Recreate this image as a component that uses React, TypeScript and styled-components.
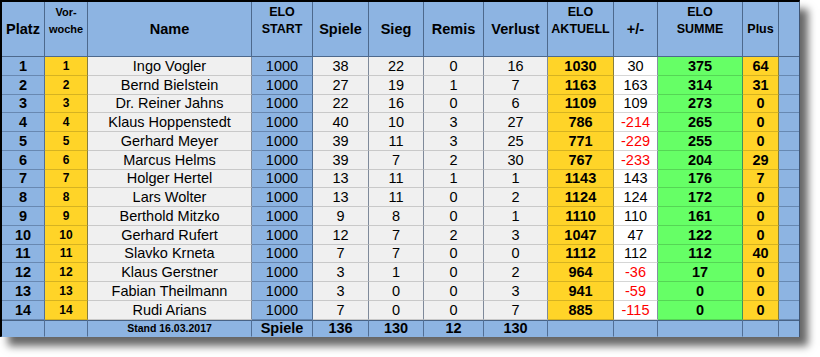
import React from "react";
import styled, { createGlobalStyle } from "styled-components";

const GlobalStyle = createGlobalStyle`
  body {
    margin: 0;
    background: #ffffff;
    font-family: "Liberation Sans", Arial, sans-serif;
  }
`;

const COLUMNS = "43px 43px 164px 61px 56px 55px 60px 64px 66px 44px 85px 36px 20px";

const COLORS: Record<string, string> = {
  blue: "#8db4e2",
  yellow: "#ffd428",
  grey: "#f0f0f0",
  white: "#ffffff",
  green: "#66ff66",
};

type Kind = "blue" | "yellow" | "grey" | "white" | "green";

const Page = styled.div`
  width: 820px;
  height: 357px;
  background: #ffffff;
`;

const Sheet = styled.div`
  width: 797px;
  border-top: 2px solid #000;
  border-left: 2px solid #000;
  border-right: 1px solid #3f5573;
  border-bottom: 1px solid #3f5573;
  box-shadow: 8px 9px 8px rgba(0, 0, 0, 0.6);
  background: #8db4e2;
`;

const Row = styled.div<{ $h: number }>`
  display: grid;
  grid-template-columns: ${COLUMNS};
  height: ${(p) => p.$h}px;
`;

const HeadCell = styled.div`
  box-sizing: border-box;
  background: #8db4e2;
  border-right: 1px solid rgba(35, 55, 85, 0.6);
  border-bottom: 1px solid rgba(35, 55, 85, 0.6);
  padding-top: 2px;
  display: flex;
  flex-direction: column;
  align-items: center;
  font-weight: 700;
  color: #000;
  &:last-child {
    border-right: none;
  }
`;

const HeadLine = styled.span<{ $size: number }>`
  height: 17px;
  line-height: 17px;
  font-size: ${(p) => p.$size}px;
  white-space: nowrap;
`;

const Cell = styled.div<{
  $kind: Kind;
  $bold?: boolean;
  $size?: number;
  $red?: boolean;
  $foot?: boolean;
}>`
  box-sizing: border-box;
  background: ${(p) => COLORS[p.$kind]};
  border-right: 1px solid rgba(35, 55, 85, 0.55);
  border-bottom: 1px solid
    ${(p) => (p.$foot ? "transparent" : p.$kind === "blue" ? "rgba(35, 55, 85, 0.35)" : "rgba(0, 0, 0, 0.16)")};
  box-shadow: ${(p) => (p.$foot ? "inset 0 1px 0 rgba(35, 55, 85, 0.65)" : "none")};
  display: flex;
  align-items: center;
  justify-content: center;
  font-size: ${(p) => p.$size ?? 14.5}px;
  font-weight: ${(p) => (p.$bold ? 700 : 400)};
  color: ${(p) => (p.$red ? "#ff0000" : "#000")};
  white-space: nowrap;
  &:last-child {
    border-right: none;
  }
`;

const HEADERS: [string, string, number][] = [
  ["", "Platz", 14.5],
  ["Vor-", "woche", 11],
  ["", "Name", 14.5],
  ["ELO", "START", 12.5],
  ["", "Spiele", 14.5],
  ["", "Sieg", 14.5],
  ["", "Remis", 14.5],
  ["", "Verlust", 14.5],
  ["ELO", "AKTUELL", 12.5],
  ["", "+/-", 14.5],
  ["ELO", "SUMME", 12.5],
  ["", "Plus", 12.5],
  ["", "", 12.5],
];

type Player = [string, number, number, number, number, number, number, number, number];

const PLAYERS: Player[] = [
  ["Ingo Vogler", 38, 22, 0, 16, 1030, 30, 375, 64],
  ["Bernd Bielstein", 27, 19, 1, 7, 1163, 163, 314, 31],
  ["Dr. Reiner Jahns", 22, 16, 0, 6, 1109, 109, 273, 0],
  ["Klaus Hoppenstedt", 40, 10, 3, 27, 786, -214, 265, 0],
  ["Gerhard Meyer", 39, 11, 3, 25, 771, -229, 255, 0],
  ["Marcus Helms", 39, 7, 2, 30, 767, -233, 204, 29],
  ["Holger Hertel", 13, 11, 1, 1, 1143, 143, 176, 7],
  ["Lars Wolter", 13, 11, 0, 2, 1124, 124, 172, 0],
  ["Berthold Mitzko", 9, 8, 0, 1, 1110, 110, 161, 0],
  ["Gerhard Rufert", 12, 7, 2, 3, 1047, 47, 122, 0],
  ["Slavko Krneta", 7, 7, 0, 0, 1112, 112, 112, 40],
  ["Klaus Gerstner", 3, 1, 0, 2, 964, -36, 17, 0],
  ["Fabian Theilmann", 3, 0, 0, 3, 941, -59, 0, 0],
  ["Rudi Arians", 7, 0, 0, 7, 885, -115, 0, 0],
];

export default function App() {
  return (
    <Page>
      <GlobalStyle />
      <Sheet>
        <Row $h={36}>
          {HEADERS.map(([top, bottom, size], i) => (
            <HeadCell key={i}>
              <HeadLine $size={size}>{top}</HeadLine>
              <HeadLine $size={size}>{bottom}</HeadLine>
            </HeadCell>
          ))}
        </Row>
        <Row $h={19}>
          {HEADERS.map((_, i) => (
            <HeadCell key={i} />
          ))}
        </Row>
        {PLAYERS.map(([name, spiele, sieg, remis, verlust, elo, diff, summe, plus], i) => (
          <Row $h={18.75} key={name}>
            <Cell $kind="blue" $bold $size={14.5}>{i + 1}</Cell>
            <Cell $kind="yellow" $bold $size={12}>{i + 1}</Cell>
            <Cell $kind="grey">{name}</Cell>
            <Cell $kind="blue">1000</Cell>
            <Cell $kind="grey">{spiele}</Cell>
            <Cell $kind="grey">{sieg}</Cell>
            <Cell $kind="grey">{remis}</Cell>
            <Cell $kind="grey">{verlust}</Cell>
            <Cell $kind="yellow" $bold>{elo}</Cell>
            <Cell $kind="white" $red={diff < 0}>{diff}</Cell>
            <Cell $kind="green" $bold>{summe}</Cell>
            <Cell $kind="yellow" $bold>{plus}</Cell>
            <Cell $kind="blue" />
          </Row>
        ))}
        <Row $h={16.5}>
          <Cell $kind="blue" $foot />
          <Cell $kind="blue" $foot />
          <Cell $kind="blue" $foot $bold $size={10.5}>Stand 16.03.2017</Cell>
          <Cell $kind="blue" $foot $bold>Spiele</Cell>
          <Cell $kind="blue" $foot $bold>136</Cell>
          <Cell $kind="blue" $foot $bold>130</Cell>
          <Cell $kind="blue" $foot $bold>12</Cell>
          <Cell $kind="blue" $foot $bold>130</Cell>
          <Cell $kind="blue" $foot />
          <Cell $kind="blue" $foot />
          <Cell $kind="blue" $foot />
          <Cell $kind="blue" $foot />
          <Cell $kind="blue" $foot />
        </Row>
      </Sheet>
    </Page>
  );
}
